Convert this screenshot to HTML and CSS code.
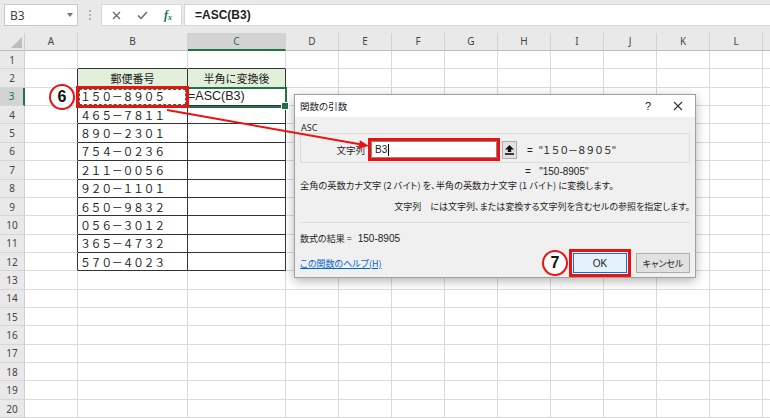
FILE: index.html
```html
<!DOCTYPE html>
<html lang="ja">
<head>
<meta charset="utf-8">
<title>ASC関数</title>
<link rel="stylesheet" href="styles.css">
</head>
<body>
<div class="fbar">
  <div class="namebox"><span>B3</span><span class="dd"></span></div>
  <div class="grip"><span></span><span></span><span></span></div>
  <div class="fbtns">
    <span class="fb"><svg width="9" height="9" viewBox="0 0 9 9"><path d="M1 1L8 8M8 1L1 8" stroke="#6a6a6a" stroke-width="1.3" fill="none"/></svg></span>
    <span class="fb"><svg width="11" height="9" viewBox="0 0 11 9"><path d="M1 4.5L4 7.5L10 1" stroke="#6a6a6a" stroke-width="1.5" fill="none"/></svg></span>
    <span class="fb fx">f<span class="fxs">x</span></span>
  </div>
  <div class="finput">=ASC(B3)</div>
</div>

<div class="sheet">
  <div class="hdr">
    <div class="corner"><span class="tri"></span></div>
    <div class="ch">A</div><div class="ch wb">B</div><div class="ch wc sel">C</div>
    <div class="ch">D</div><div class="ch">E</div><div class="ch">F</div><div class="ch">G</div><div class="ch">H</div><div class="ch">I</div><div class="ch">J</div><div class="ch">K</div><div class="ch">L</div><div class="ch m"></div>
  </div>
  <div class="row"><div class="rh">1</div><div class="c ca"></div><div class="c cb tb"></div><div class="c cc tb"></div><div class="rest"></div></div>
  <div class="row"><div class="rh">2</div><div class="c ca tl"></div><div class="c cb t th">郵便番号</div><div class="c cc t th">半角に変換後</div><div class="rest"></div></div>
  <div class="row"><div class="rh rsel">3</div><div class="c ca tl"></div><div class="c cb t">１５０－８９０５</div><div class="c cc t lat">=ASC(B3)</div><div class="rest"></div></div>
  <div class="row"><div class="rh">4</div><div class="c ca tl"></div><div class="c cb t">４６５－７８１１</div><div class="c cc t"></div><div class="rest"></div></div>
  <div class="row"><div class="rh">5</div><div class="c ca tl"></div><div class="c cb t">８９０－２３０１</div><div class="c cc t"></div><div class="rest"></div></div>
  <div class="row"><div class="rh">6</div><div class="c ca tl"></div><div class="c cb t">７５４－０２３６</div><div class="c cc t"></div><div class="rest"></div></div>
  <div class="row"><div class="rh">7</div><div class="c ca tl"></div><div class="c cb t">２１１－００５６</div><div class="c cc t"></div><div class="rest"></div></div>
  <div class="row"><div class="rh">8</div><div class="c ca tl"></div><div class="c cb t">９２０－１１０１</div><div class="c cc t"></div><div class="rest"></div></div>
  <div class="row"><div class="rh">9</div><div class="c ca tl"></div><div class="c cb t">６５０－９８３２</div><div class="c cc t"></div><div class="rest"></div></div>
  <div class="row"><div class="rh">10</div><div class="c ca tl"></div><div class="c cb t">０５６－３０１２</div><div class="c cc t"></div><div class="rest"></div></div>
  <div class="row"><div class="rh">11</div><div class="c ca tl"></div><div class="c cb t">３６５－４７３２</div><div class="c cc t"></div><div class="rest"></div></div>
  <div class="row"><div class="rh">12</div><div class="c ca tl"></div><div class="c cb t">５７０－４０２３</div><div class="c cc t"></div><div class="rest"></div></div>
  <div class="row"><div class="rh">13</div><div class="c ca"></div><div class="c cb"></div><div class="c cc"></div><div class="rest"></div></div>
  <div class="row"><div class="rh">14</div><div class="c ca"></div><div class="c cb"></div><div class="c cc"></div><div class="rest"></div></div>
  <div class="row"><div class="rh">15</div><div class="c ca"></div><div class="c cb"></div><div class="c cc"></div><div class="rest"></div></div>
  <div class="row"><div class="rh">16</div><div class="c ca"></div><div class="c cb"></div><div class="c cc"></div><div class="rest"></div></div>
  <div class="row"><div class="rh">17</div><div class="c ca"></div><div class="c cb"></div><div class="c cc"></div><div class="rest"></div></div>
  <div class="row"><div class="rh">18</div><div class="c ca"></div><div class="c cb"></div><div class="c cc"></div><div class="rest"></div></div>
  <div class="row"><div class="rh">19</div><div class="c ca"></div><div class="c cb"></div><div class="c cc"></div><div class="rest"></div></div>
  <div class="row"><div class="rh">20</div><div class="c ca"></div><div class="c cb"></div><div class="c cc"></div><div class="rest"></div></div>
</div>

<div class="sel-c3"></div>
<div class="mark-b3"></div>
<div class="step step6">6</div>

<div class="dlg">
  <div class="dlg-title"><span>関数の引数</span><span class="q">?</span><span class="close"><svg width="10" height="10" viewBox="0 0 10 10"><path d="M1 1L9 9M9 1L1 9" stroke="#333" stroke-width="1.1" fill="none"/></svg></span></div>
  <div class="dlg-body">
    <div class="asc">ASC</div>
    <div class="grp">
      <div class="field">
        <span class="flabel">文字列</span>
        <span class="argbox"><span class="argtxt">B3</span><span class="caret"></span></span>
        <span class="collapse"><svg width="9" height="10" viewBox="0 0 9 10"><path d="M4.5 0L9 4.5H6.2V7H2.8V4.5H0Z" fill="#111"/><rect x="0" y="8.2" width="9" height="1.6" fill="#111"/></svg></span>
        <span class="fval">=&nbsp;&nbsp;<span class="fw">"１５０－８９０５"</span></span>
      </div>
    </div>
    <div class="res1">=&nbsp;&nbsp; "150-8905"</div>
    <div class="desc">全角の英数カナ文字 (2 バイト) を、半角の英数カナ文字 (1 バイト) に変換します。</div>
    <div class="desc2"><span class="arg">文字列</span>には文字列、または変換する文字列を含むセルの参照を指定します。</div>
    <div class="sep"></div>
    <div class="fres">数式の結果 =&nbsp;&nbsp; <span class="lat">150-8905</span></div>
    <div class="foot">
      <a class="help">この関数のヘルプ(H)</a>
      <div class="btns">
        <span class="okmark"><span class="btn ok">OK</span></span>
        <span class="btn cancel">キャンセル</span>
      </div>
    </div>
  </div>
</div>

<div class="step step7">7</div>

<svg class="arrow" width="770" height="419" viewBox="0 0 770 419">
  <line x1="167" y1="110" x2="360" y2="144.3" stroke="#ee1111" stroke-width="2"/>
  <polygon points="369,146 358.5,148.4 359.9,140.2" fill="#ee1111"/>
</svg>
</body>
</html>
```

FILE: styles.css
```css
* { box-sizing: border-box; margin: 0; padding: 0; }

body {
  width: 770px;
  height: 419px;
  overflow: hidden;
  position: relative;
  background: #fff;
  font-family: "Noto Sans", "Noto Sans CJK JP", sans-serif;
  color: #222;
}

/* formula bar */
.fbar {
  height: 33px;
  background: #e9e9e9;
  display: flex;
  align-items: flex-start;
  padding: 4px 0 0 4px;
}
.namebox {
  width: 74px;
  height: 22px;
  background: #fff;
  border: 1px solid #c8c8c8;
  display: flex;
  align-items: center;
  justify-content: space-between;
  padding: 0 4px 0 5px;
  font-size: 12px;
  color: #444;
}
.dd {
  width: 0;
  height: 0;
  border-left: 3.5px solid transparent;
  border-right: 3.5px solid transparent;
  border-top: 4px solid #777;
}
.grip {
  width: 23px;
  height: 22px;
  display: flex;
  flex-direction: column;
  align-items: center;
  justify-content: center;
  gap: 2px;
}
.grip span {
  width: 2px;
  height: 2px;
  background: #b0b0b0;
}
.fbtns {
  width: 81px;
  height: 22px;
  background: #fff;
  border: 1px solid #d6d6d6;
  display: flex;
  align-items: center;
  padding-left: 1px;
}
.fb {
  width: 26px;
  display: flex;
  justify-content: center;
  align-items: center;
}
.fx {
  font-family: "Liberation Serif", serif;
  font-style: italic;
  font-weight: bold;
  font-size: 12px;
  color: #217346;
}
.fxs { font-size: 8px; position: relative; top: 2px; }
.finput {
  flex: 1;
  height: 22px;
  margin-left: 2px;
  background: #fff;
  border: 1px solid #d6d6d6;
  border-right: none;
  padding-left: 10px;
  font-family: "Liberation Sans", sans-serif;
  font-weight: bold;
  font-size: 12px;
  line-height: 20px;
  color: #222;
}

/* sheet */
.sheet { display: flex; flex-direction: column; }
.hdr { display: flex; height: 18px; }
.row { display: flex; height: 18.37px; }

.corner {
  width: 25px;
  flex: none;
  position: relative;
  background: #e9e9e9;
  border-right: 1px solid #cfcfcf;
  border-bottom: 1px solid #bdbdbd;
}
.tri {
  position: absolute;
  right: 2px;
  bottom: 2px;
  width: 0;
  height: 0;
  border-left: 11px solid transparent;
  border-bottom: 11px solid #bdbdbd;
}
.ch {
  width: 53px;
  flex: none;
  background: #e9e9e9;
  border-right: 1px solid #d2d2d2;
  border-bottom: 1px solid #bdbdbd;
  font-size: 10px;
  line-height: 17px;
  color: #444;
  text-align: center;
}
.ch.wb { width: 110px; }
.ch.wc { width: 98px; }
.ch.m { flex: 1; border-right: none; }
.ch.sel {
  background: #d3d3d3;
  color: #217346;
  border-bottom: 2px solid #217346;
}

.rh {
  width: 25px;
  flex: none;
  background: #e9e9e9;
  border-right: 1px solid #cfcfcf;
  border-bottom: 1px solid #d6d6d6;
  font-size: 10px;
  color: #444;
  display: flex;
  align-items: center;
  justify-content: center;
}
.rh.rsel {
  background: #d3d3d3;
  color: #217346;
  border-right: 2px solid #217346;
}

.c {
  flex: none;
  border-right: 1px solid #dadada;
  border-bottom: 1px solid #dadada;
  display: flex;
  align-items: center;
  padding-left: 2px;
  font-family: "Noto Sans CJK JP", sans-serif;
  font-size: 11px;
  letter-spacing: -0.4px;
  color: #222;
  white-space: nowrap;
}
.ca { width: 53px; }
.cb { width: 110px; }
.cc { width: 98px; }
.c.t { border-right-color: #333; border-bottom-color: #333; }
.c.tb { border-bottom-color: #333; }
.c.tl { border-right-color: #333; }
.c.th {
  background: #e2efda;
  justify-content: center;
  padding-left: 0;
  letter-spacing: 0;
}
.c.lat {
  font-family: "Liberation Sans", sans-serif;
  font-size: 12.5px;
  letter-spacing: 0;
  padding-left: 0;
}
.rest {
  flex: 1;
  border-bottom: 1px solid #dadada;
  background: repeating-linear-gradient(90deg, transparent 0 52px, #dadada 52px 53px);
}

/* overlays on the sheet */
.sel-c3 {
  position: absolute;
  left: 187px;
  top: 86.5px;
  width: 100px;
  height: 21px;
  border: 2px solid #217346;
  z-index: 2;
}
.sel-c3::after {
  content: "";
  position: absolute;
  right: -4px;
  bottom: -4px;
  width: 6px;
  height: 6px;
  background: #217346;
  border: 1px solid #fff;
}
.mark-b3 {
  position: absolute;
  left: 76px;
  top: 86px;
  width: 113px;
  height: 22px;
  border: 3px solid #ee1111;
  z-index: 3;
}
.mark-b3::after {
  content: "";
  position: absolute;
  inset: 0;
  border: 1px dashed #217346;
}
.step {
  position: absolute;
  width: 26px;
  height: 26px;
  border: 2.5px solid #ee1111;
  border-radius: 50%;
  background: #fff;
  display: flex;
  align-items: center;
  justify-content: center;
  font-family: "Liberation Sans", sans-serif;
  font-weight: bold;
  font-size: 16px;
  color: #111;
  z-index: 10;
}
.step6 { left: 49px; top: 84px; }
.step7 { left: 542px; top: 250px; }

.arrow {
  position: absolute;
  left: 0;
  top: 0;
  z-index: 11;
  pointer-events: none;
}

/* dialog */
.dlg {
  position: absolute;
  left: 294px;
  top: 94px;
  width: 402px;
  height: 184px;
  background: #f0f0f0;
  border: 1px solid #a0a0a0;
  box-shadow: 0 3px 10px rgba(0, 0, 0, 0.3);
  display: flex;
  flex-direction: column;
  font-family: "Noto Sans CJK JP", sans-serif;
  font-feature-settings: "palt";
  font-size: 9px;
  color: #222;
  z-index: 5;
}
.dlg-title {
  height: 22px;
  flex: none;
  background: #fff;
  display: flex;
  align-items: center;
  padding-left: 5px;
  font-size: 9.5px;
}
.q {
  margin-left: auto;
  width: 30px;
  text-align: center;
  font-family: "Liberation Sans", sans-serif;
  font-size: 11px;
}
.close {
  width: 30px;
  margin-right: 2px;
  display: flex;
  justify-content: center;
}
.dlg-body {
  flex: 1;
  display: flex;
  flex-direction: column;
  padding: 0 5px;
}
.asc {
  margin-top: 6px;
  height: 10px;
  line-height: 10px;
  padding-left: 1px;
  font-family: "Noto Sans", sans-serif;
  font-size: 9px;
}
.grp {
  height: 30px;
  border: 1px solid #dcdcdc;
  padding-top: 4px;
}
.field {
  display: flex;
  align-items: center;
  height: 23px;
}
.flabel {
  width: 67px;
  text-align: right;
  padding-right: 3px;
  font-size: 9.5px;
}
.argbox {
  width: 132px;
  height: 23px;
  border: 3px solid #ee1111;
  background: #fff;
  box-shadow: inset 0 0 0 1px #8a8a8a;
  display: flex;
  align-items: center;
  padding-left: 4px;
}
.argtxt {
  font-family: "Liberation Sans", sans-serif;
  font-size: 10px;
}
.caret {
  width: 1px;
  height: 12px;
  background: #000;
  margin-left: 1px;
}
.collapse {
  margin-left: 2px;
  width: 15px;
  height: 18px;
  background: #e1e1e1;
  border: 1px solid #adadad;
  display: flex;
  align-items: center;
  justify-content: center;
}
.fval {
  margin-left: 10px;
  font-family: "Liberation Sans", sans-serif;
  font-size: 10px;
  white-space: nowrap;
}
.fw {
  font-family: "Noto Sans CJK JP", sans-serif;
  font-feature-settings: normal;
  font-size: 10px;
  letter-spacing: -1.3px;
}
.res1 {
  margin-top: 2px;
  margin-left: 225px;
  line-height: 14px;
  font-family: "Liberation Sans", sans-serif;
  font-size: 10px;
}
.desc {
  line-height: 12px;
  white-space: nowrap;
  font-size: 9.2px;
}
.desc2 {
  margin-top: 10px;
  line-height: 12px;
  text-align: right;
  white-space: nowrap;
}
.arg { margin-right: 9px; }
.sep {
  margin-top: 9px;
  height: 1px;
  background: #dcdcdc;
}
.fres {
  margin-top: 10px;
  line-height: 12px;
}
.lat {
  font-family: "Liberation Sans", sans-serif;
  font-size: 10px;
}
.foot {
  margin-top: 4px;
  height: 28px;
  display: flex;
  align-items: center;
}
.help {
  color: #0066cc;
  text-decoration: underline;
  font-size: 9px;
}
.btns {
  margin-left: auto;
  display: flex;
  align-items: center;
}
.okmark {
  width: 62px;
  height: 28px;
  border: 3px solid #ee1111;
  display: flex;
  align-items: center;
  justify-content: center;
}
.btn {
  width: 54px;
  height: 20px;
  display: flex;
  align-items: center;
  justify-content: center;
  background: #e1e1e1;
  border: 1px solid #adadad;
}
.btn.ok {
  background: #e5f1fb;
  border-color: #0078d7;
  font-family: "Liberation Sans", sans-serif;
  font-size: 10px;
}
.btn.cancel {
  margin-left: 5px;
  font-size: 9px;
}
```
